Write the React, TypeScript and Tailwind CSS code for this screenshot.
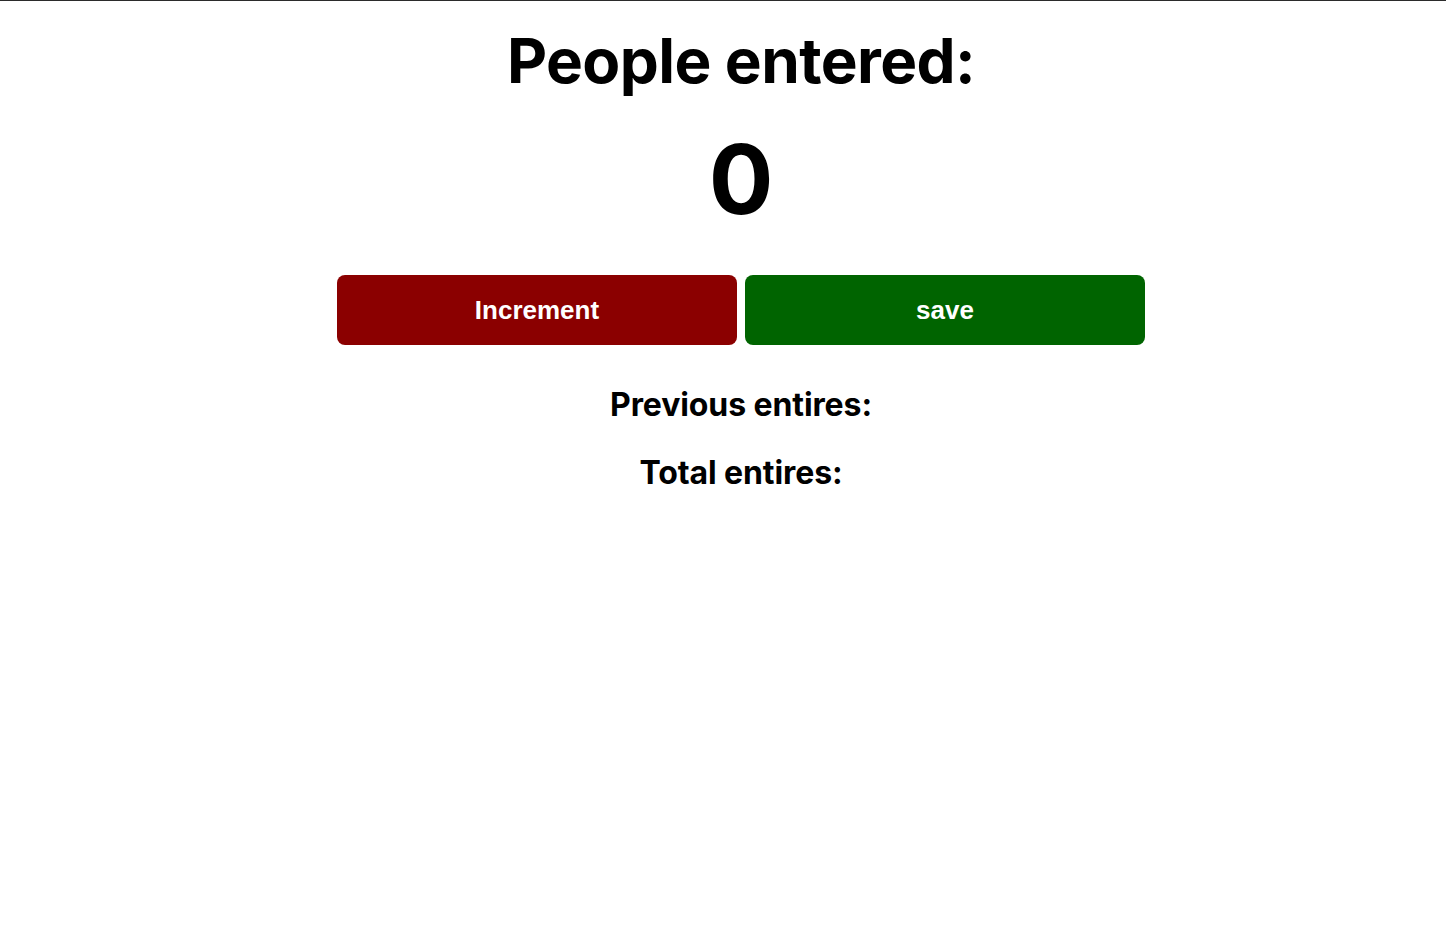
const App = () => {
  return (
    <div className="min-h-screen bg-white border-t border-[#2b2b2b] pl-[36px] font-['Inter',sans-serif] text-black">
      <div className="flex flex-col items-center">
        <h1 className="mt-[22px] text-[62px] leading-[76px] font-bold tracking-[-0.6px]">People entered:</h1>
        <h2 className="mt-[25px] text-[96px] leading-[110px] font-bold">0</h2>
        <div className="mt-[41px] flex gap-2">
          <button className="w-[400px] h-[70px] rounded-lg bg-[#8b0000] text-white font-['Liberation_Sans',Arial,sans-serif] font-bold text-[26px]">
            Increment
          </button>
          <button className="w-[400px] h-[70px] rounded-lg bg-[#006400] text-white font-['Liberation_Sans',Arial,sans-serif] font-bold text-[26px]">
            save
          </button>
        </div>
        <p className="mt-[40px] text-[32px] leading-[40px] font-bold tracking-[-0.1px]">Previous entires:</p>
        <p className="mt-[28px] text-[32px] leading-[40px] font-bold tracking-[-0.1px]">Total entires:</p>
      </div>
    </div>
  );
};

export default App;
